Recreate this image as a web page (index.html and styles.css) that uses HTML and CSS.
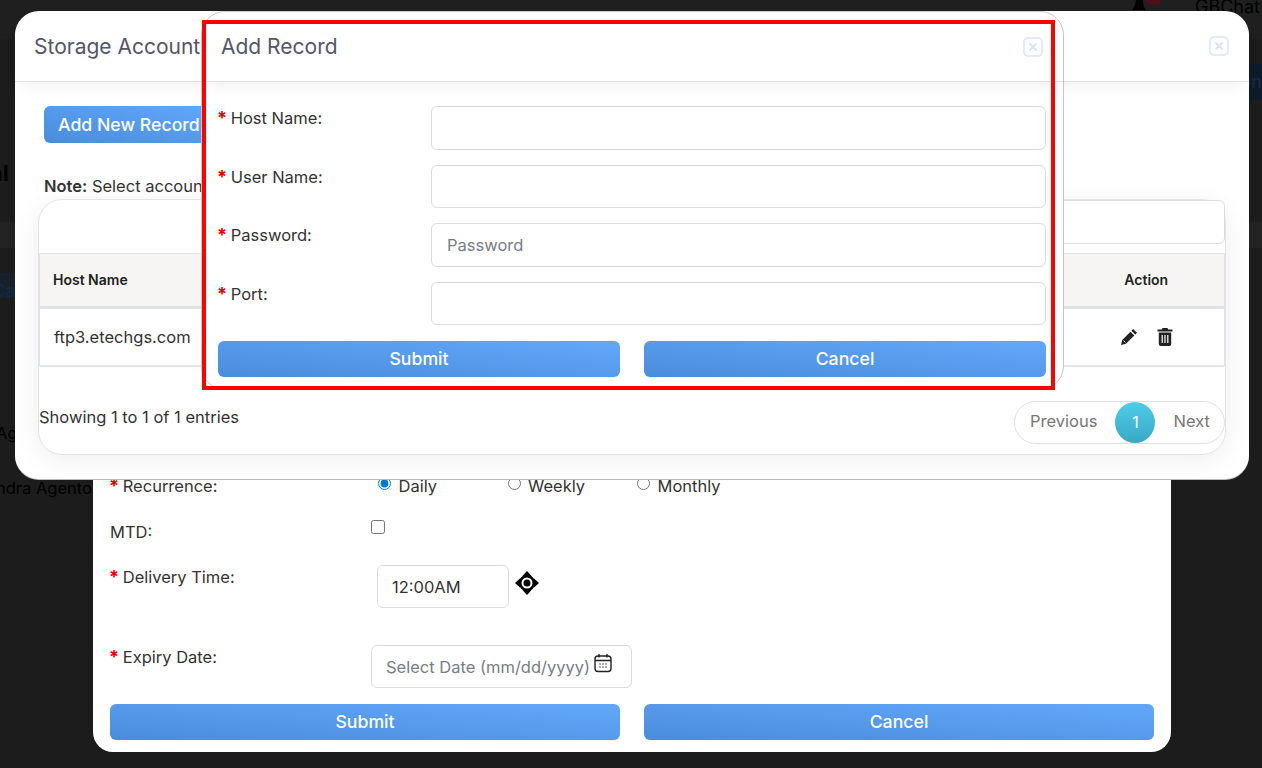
FILE: index.html
```html
<!DOCTYPE html>
<html lang="en">
<head>
    <meta charset="UTF-8">
    <title>Add Record</title>
    <link rel="stylesheet" href="styles.css">
</head>
<body>
    <!-- dimmed page behind the modals -->
    <div class="page">
        <div class="topbar">
            <svg class="bell" width="14" height="10" viewBox="0 0 14 10"><path d="M0 10 Q3 7 4 0 H11 Q11 7 14 10Z" fill="#000"/></svg>
            <span class="badge"></span>
            <span class="chat-name">GBChat A</span>
        </div>
        <div class="band"><span>on</span></div>
        <div class="page-title">al</div>
        <div class="stripe"></div>
        <div class="band-left"><span>Ca</span></div>
        <div class="page-row">Ag</div>
        <div class="page-row page-row-last">ndra Agentol</div>
    </div>

    <!-- report form, bottom modal -->
    <div class="modal modal-report">
        <div class="row row-recurrence">
            <label class="lbl"><span class="req">*</span> Recurrence:</label>
            <div class="radios">
                <label class="radio"><input type="radio" name="rec" checked> Daily</label>
                <label class="radio"><input type="radio" name="rec"> Weekly</label>
                <label class="radio"><input type="radio" name="rec"> Monthly</label>
            </div>
        </div>
        <div class="row row-mtd">
            <label class="lbl">MTD:</label>
            <input class="check" type="checkbox">
        </div>
        <div class="row row-time">
            <label class="lbl"><span class="req">*</span> Delivery Time:</label>
            <input class="input input-time" type="text" value="12:00AM">
            <svg class="move-icon" width="24" height="24" viewBox="0 0 24 24">
                <path d="M12 0l5 5.500H7zM12 24l-5-5.500h10zM0 12l5.500-5v10zM24 12l-5.500 5V7z" fill="#000"/>
                <circle cx="12" cy="12" r="6.800" fill="none" stroke="#000" stroke-width="2.600"/>
                <circle cx="12" cy="12" r="3.500" fill="#000"/>
            </svg>
        </div>
        <div class="row row-date">
            <label class="lbl"><span class="req">*</span> Expiry Date:</label>
            <div class="date-wrap">
                <input class="input input-date" type="text" placeholder="Select Date (mm/dd/yyyy)">
                <svg class="cal-icon" width="18" height="20" viewBox="0 0 18 20" fill="none" stroke="#222" stroke-width="1.400">
                    <rect x="1" y="3" width="16" height="15.500" rx="3"/>
                    <path d="M1 7.500h16M5 1v3.500M13 1v3.500"/>
                    <path d="M5.500 11h1M8.500 11h1M11.500 11h1M5.500 14h1M8.500 14h1M11.500 14h1" stroke-width="1.300"/>
                </svg>
            </div>
        </div>
        <div class="actions">
            <button class="btn">Submit</button>
            <button class="btn">Cancel</button>
        </div>
    </div>

    <!-- storage account modal -->
    <div class="modal modal-storage">
        <div class="modal-head">
            <h2>Storage Account</h2>
            <span class="close"><svg width="10" height="10" viewBox="0 0 10 10"><path d="M1.500 1.500l7 7M8.500 1.500l-7 7" stroke="#d5e5fb" stroke-width="2"/></svg></span>
        </div>
        <div class="storage-body">
            <button class="btn btn-add">Add New Record</button>
            <p class="note"><b>Note:</b> Select account</p>
            <div class="card">
                <div class="search-line"><input class="input input-search" type="text"></div>
                <table class="tbl">
                    <thead>
                        <tr><th class="col-host">Host Name</th><th></th><th class="col-action">Action</th></tr>
                    </thead>
                    <tbody>
                        <tr>
                            <td class="col-host">ftp3.etechgs.com</td>
                            <td></td>
                            <td class="col-action">
                                <svg width="18" height="18" viewBox="0 0 18 18"><path d="M13.200 1l3.800 3.800-1.700 1.700-3.800-3.800zM10.500 3.700l3.800 3.800-8.300 8.300-4.900 1.100 1.100-4.900z" fill="#222"/><path d="M3.500 12.500l2 2" stroke="#fff" stroke-width=".8"/></svg>
                                <svg class="trash" width="16" height="18" viewBox="0 0 16 18"><path d="M5.500 0h5l.7 1.500H15.500v2H.5v-2h4.300zM1.800 4.500h12.400V16a2 2 0 0 1-2 2H3.800a2 2 0 0 1-2-2z" fill="#222"/><path d="M5.200 7v8M8 7v8M10.800 7v8" stroke="#fff" stroke-width="1.200"/></svg>
                            </td>
                        </tr>
                    </tbody>
                </table>
                <div class="card-foot">
                    <span class="showing">Showing 1 to 1 of 1 entries</span>
                    <div class="pager">
                        <span class="page-link">Previous</span>
                        <span class="page-num">1</span>
                        <span class="page-link">Next</span>
                    </div>
                </div>
            </div>
        </div>
    </div>

    <!-- add record modal -->
    <div class="modal modal-add">
        <div class="modal-head">
            <h2>Add Record</h2>
            <span class="close"><svg width="10" height="10" viewBox="0 0 10 10"><path d="M1.500 1.500l7 7M8.500 1.500l-7 7" stroke="#d5e5fb" stroke-width="2"/></svg></span>
        </div>
        <form class="add-form">
            <div class="add-row">
                <label class="lbl"><span class="req">*</span> Host Name:</label>
                <input class="input" type="text">
            </div>
            <div class="add-row">
                <label class="lbl"><span class="req">*</span> User Name:</label>
                <input class="input" type="text">
            </div>
            <div class="add-row">
                <label class="lbl"><span class="req">*</span> Password:</label>
                <input class="input" type="text" placeholder="Password">
            </div>
            <div class="add-row">
                <label class="lbl"><span class="req">*</span> Port:</label>
                <input class="input" type="text">
            </div>
            <div class="actions actions-add">
                <button class="btn" type="button">Submit</button>
                <button class="btn" type="button">Cancel</button>
            </div>
        </form>
    </div>

    <!-- highlight drawn on the screenshot -->
    <div class="highlight"></div>
</body>
</html>
```

FILE: styles.css
```css
* {
    box-sizing: border-box;
}

body {
    margin: 0;
    width: 1262px;
    height: 768px;
    overflow: hidden;
    background: #1c1c1c;
    font-family: Inter, "Liberation Sans", sans-serif;
    font-size: 16.500px;
    color: #333;
    position: relative;
}

/* background page */
.page {
    color: #000;
}

.topbar {
    height: 38px;
    background: #1f1f1f;
    display: flex;
    justify-content: flex-end;
    align-items: flex-start;
    overflow: hidden;
}

.bell {
    margin-right: -1px;
}

.badge {
    width: 17px;
    height: 11px;
    margin-top: -6px;
    margin-right: 33px;
    border-radius: 50%;
    background: #4d0e18;
}

.chat-name {
    margin-top: -4px;
    width: 67px;
    white-space: nowrap;
    font-size: 18px;
    color: #000;
}

.band {
    height: 36px;
    margin: 26px 0 0 auto;
    width: 200px;
    background: #0c1a2a;
    text-align: right;
    font-size: 18px;
    line-height: 36px;
    color: #1a2c44;
}

.page-title {
    margin-top: 60px;
    font-size: 22px;
    line-height: 26px;
    font-weight: 700;
    margin-left: -10px;
    white-space: nowrap;
}

.stripe {
    height: 26px;
    margin-top: 36px;
    background: #232323;
}

.band-left {
    width: 200px;
    height: 25px;
    margin-top: 25px;
    margin-left: -8px;
    background: #18212b;
    font-size: 18px;
    line-height: 35px;
    color: #0f2a45;
}

.page-row {
    margin-top: 124px;
    margin-left: -4px;
    line-height: 22px;
    white-space: nowrap;
}

.page-row-last {
    margin-top: 33px;
}

/* modals */
.modal {
    position: absolute;
    background: #fff;
}

.modal-report {
    left: 93px;
    top: 300px;
    width: 1078px;
    height: 452px;
    border-radius: 20px;
    padding: 174px 17px 0;
}

.modal-storage {
    left: 15px;
    top: 11px;
    width: 1234px;
    height: 468px;
    border-radius: 24px;
    box-shadow: 0 1px 0 #bbb;
}

.modal-add {
    left: 201px;
    top: 11px;
    width: 863px;
    height: 379px;
    border-radius: 24px;
    border: 1px solid #c8c8c8;
}

.modal-head {
    height: 71px;
    display: flex;
    align-items: center;
    justify-content: space-between;
    padding: 0 20px 0 19px;
    border-bottom: 1px solid #e2e2e2;
    box-shadow: 0 8px 14px -6px rgba(0, 0, 0, .08);
    position: relative;
}

.modal-add .modal-head {
    height: 70px;
}

.modal-head h2 {
    margin: 0;
    font-size: 21px;
    font-weight: 400;
    color: #555568;
    white-space: nowrap;
}

.close {
    width: 20px;
    height: 20px;
    border: 2px solid #e0ecfc;
    border-radius: 5px;
    display: flex;
    align-items: center;
    justify-content: center;
}

/* form pieces */
.lbl {
    display: block;
    color: #333;
}

.req {
    color: #e00000;
    font-weight: 700;
    font-size: 18px;
    line-height: 0;
    margin: 0 -1px;
}

.input {
    display: block;
    height: 43.500px;
    border: 1px solid #dcdcdc;
    border-radius: 6px;
    padding: 0 15px;
    font-family: inherit;
    font-size: 16.500px;
    color: #333;
    background: #fff;
}

.input::placeholder {
    color: #777d85;
    opacity: 1;
}

.btn {
    height: 36px;
    border: 0;
    border-radius: 6px;
    padding-bottom: 2px;
    font-family: inherit;
    font-size: 17.700px;
    font-weight: 500;
    color: #fff;
    background: linear-gradient(to top right, #4a8cdc, #62a8fa);
}

.actions {
    display: grid;
    grid-template-columns: 510px 510px;
    column-gap: 24px;
}

/* report form */
.row {
    display: grid;
    grid-template-columns: 261px 1fr;
}

.row-recurrence {
    height: 40px;
    line-height: 24px;
}

.radios {
    display: flex;
    padding-left: 6px;
}

.radio {
    width: 129.500px;
    display: flex;
    gap: 6.500px;
    white-space: nowrap;
}

.radio input {
    margin: 3px 1px 0;
    width: 13px;
    height: 13px;
    flex: none;
    accent-color: #0075d6;
}

.row-mtd {
    height: 44px;
    align-items: start;
}

.row-mtd .lbl {
    padding-top: 8px;
}

.check {
    margin: 6px 0 0;
    width: 14px;
    height: 14px;
}

.row-time {
    grid-template-columns: 261px auto 1fr;
    height: 80px;
    margin-top: 7px;
}

.row-time .lbl {
    padding-top: 2px;
}

.input-time {
    width: 132px;
    height: 43px;
    margin-left: 6px;
    padding-left: 14px;
}

.move-icon {
    margin: 6px 0 0 6px;
}

.row-date {
    height: 59px;
}

.row-date .lbl {
    padding-top: 2px;
}

.date-wrap {
    position: relative;
    width: 261px;
}

.input-date {
    width: 261px;
    height: 43px;
    padding-left: 14px;
}

.cal-icon {
    position: absolute;
    left: 223px;
    top: 8px;
}

/* storage modal body */
.storage-body {
    padding: 24px 24px 0;
}

.btn-add {
    display: block;
    width: 180px;
    height: 37px;
    text-align: left;
    padding-left: 14px;
    margin-left: 5px;
    white-space: nowrap;
}

.note {
    margin: 34px 0 0 5px;
    line-height: 19px;
}

.note b {
    font-weight: 600;
}

.card {
    margin: 3px -1px 0;
    height: 256px;
    border: 1px solid #e4e4e4;
    border-radius: 24px;
    box-shadow: 0 4px 24px rgba(0, 0, 0, .07);
    background: #fff;
}

.search-line {
    height: 53px;
    display: flex;
    justify-content: flex-end;
}

.input-search {
    width: 330px;
    height: 44px;
    border-radius: 0 6px 6px 0;
}

.tbl {
    width: 100%;
    border-collapse: collapse;
}

.tbl th {
    height: 54px;
    padding-bottom: 2px;
    background: #f6f5f3;
    border-top: 1px solid #dee2e6;
    border-bottom: 3px solid #dee2e6;
    font-size: 14px;
    font-weight: 600;
    color: #222;
    text-align: left;
}

.tbl td {
    height: 58px;
    border-bottom: 2px solid #e3e6e8;
    color: #333;
}

.col-host {
    padding-left: 14px;
    width: 300px;
    border-left: 1px solid #dee2e6;
}

.tbl th.col-host {
    padding-left: 13px;
}

.tbl .col-action {
    width: 156px;
    text-align: center;
    border-right: 1px solid #dee2e6;
}

.tbl td.col-action {
    padding-top: 6px;
}

.trash {
    margin-left: 14px;
}

.card-foot {
    display: flex;
    justify-content: space-between;
    align-items: flex-start;
    padding-top: 34px;
}

.showing {
    line-height: 34px;
    margin-top: -1px;
}

.pager {
    width: 211px;
    height: 43px;
    border: 1px solid #e0e0e0;
    border-radius: 22px;
    display: flex;
    align-items: center;
    justify-content: space-between;
    padding-left: 15px;
    padding-right: 14px;
    padding-bottom: 3px;
    color: #777;
}

.page-num {
    width: 40px;
    height: 41px;
    margin-bottom: -3px;
    border-radius: 50%;
    background: linear-gradient(#4fcde9, #38a8c4);
    color: #fff;
    font-size: 16px;
    display: flex;
    align-items: center;
    justify-content: center;
}

/* add record form */
.add-form {
    padding: 24px 17px 0 16px;
}

.add-row {
    display: grid;
    grid-template-columns: 213px 1fr;
    height: 58.500px;
}

.add-row .lbl {
    padding-top: 2px;
}

.actions-add {
    grid-template-columns: 402px 402px;
    margin-top: 1px;
}

.highlight {
    position: absolute;
    left: 202px;
    top: 20px;
    width: 853px;
    height: 370px;
    border: 4px solid #f00;
    pointer-events: none;
}
```
